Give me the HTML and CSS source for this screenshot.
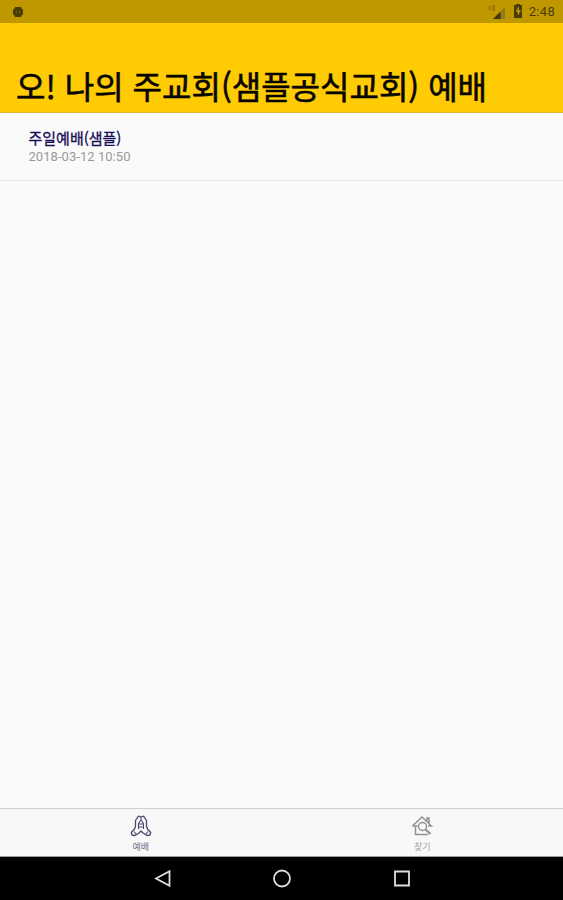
FILE: index.html
```html
<!DOCTYPE html>
<html lang="ko">
<head>
<meta charset="utf-8">
<title>예배</title>
<link rel="stylesheet" href="styles.css">
</head>
<body>
<div class="status">
  <svg class="debug" width="12" height="12" viewBox="0 0 12 12"><path d="M3 1h6l.5 1.500 1.500 1v5L9.500 9.500 9 11H3l-.5-1.500L1 8.500v-5l1.500-1z" fill="#493c08"/><path d="M4.500 4.500v3M7.500 4.500v3" stroke="#6b570e"/></svg>
  <div class="indicators">
    <svg class="signal" width="18" height="16" viewBox="0 0 18 16"><path d="M17 3v12H5z" fill="#957a17"/><path d="M12.500 7.500V15H5z" fill="#403709"/><path d="M1.500 2v4M4 2h3M4 4h3M4 6h3" stroke="#66510b" stroke-width=".8"/></svg>
    <svg class="battery" width="10" height="14" viewBox="0 0 10 14"><path d="M3 0h4v1h2v13H1V1h2z" fill="#493c08"/><path d="M5.500 3L3 7.500h2V11l2.500-4.500h-2z" fill="#c29c0c" stroke="#c29c0c" stroke-width=".5"/></svg>
    <span class="clock">2:48</span>
  </div>
</div>
<header class="header"><h1 class="title">오! 나의 주교회(샘플공식교회) 예배</h1></header>
<main class="list">
  <article class="item">
    <h2 class="name">주일예배(샘플)</h2>
    <time class="date">2018-03-12 10:50</time>
  </article>
</main>
<nav class="tabs">
  <div class="tab active">
    <svg width="22" height="22" viewBox="0 0 22 22" fill="none" stroke="currentColor" stroke-width="1.300" stroke-linejoin="round"><path d="M11 2L8.500 1.200 5.500 5.500v5.500L4.500 14 1.300 17.500l.7 2.500 3 .5 4-2.500 2-2 2 2 4 2.500 3-.5.700-2.500L17.500 14l-1-3V5.500l-3-4.300z"/><path d="M11 2v3M8.500 14V8.500L11 5l2.500 3.500V14M9 9h4M9 12h4M4 16.500l2.500 3M18 16.500l-2.500 3" stroke-width="1.100"/></svg>
    <span>예배</span>
  </div>
  <div class="tab">
    <svg width="22" height="22" viewBox="0 0 22 22" fill="none" stroke="currentColor" stroke-width="1.500"><path d="M1.500 11L11 2l9.500 9H17M4.500 11v8.500H17M1.500 11h5M16 6V3h2v5"/><circle cx="11.500" cy="11.500" r="4"/><path d="M14.500 14.500l5 4.500" stroke-width="2.200"/></svg>
    <span>찾기</span>
  </div>
</nav>
<footer class="navbar">
  <svg width="20" height="20" viewBox="0 0 20 20"><path d="M17.500 2.200v14.600L4 9.500z"/></svg>
  <svg width="20" height="20" viewBox="0 0 20 20"><circle cx="10" cy="9.500" r="8"/></svg>
  <svg width="20" height="20" viewBox="0 0 20 20"><path d="M3 2.500h14v14H3z"/></svg>
</footer>
</body>
</html>
```
FILE: styles.css
```css
* { box-sizing: border-box; }
body {
  margin: 0;
  height: 900px;
  display: flex;
  flex-direction: column;
  background: #fafafa;
  font-family: Roboto, "Noto Sans CJK KR", sans-serif;
  overflow: hidden;
}
h1, h2 { margin: 0; }
svg { display: block; flex: none; }
.status {
  height: 23px;
  background: #bf9800;
  display: flex;
  align-items: center;
  justify-content: space-between;
  padding: 0 8px 0 12px;
}
.indicators { display: flex; align-items: center; }
.battery { margin: 0 6px 2px 7px; }
.clock { font-size: 13px; line-height: 23px; color: #493c08; letter-spacing: .3px; }
.header {
  height: 90px;
  background: #ffcb03;
  border-bottom: 1px solid #dcb43b;
  padding: 38px 0 0 16px;
}
.title {
  font: 400 32px/48px "Noto Sans CJK KR", sans-serif;
  color: #080600;
  white-space: nowrap;
  -webkit-text-stroke: .6px #080600;
}
.list { flex: 1; }
.item {
  height: 68px;
  border-bottom: 1px solid #e9e9e9;
  padding: 14px 28px 0 28.5px;
}
.name {
  font: 400 15px/21px "Noto Sans CJK KR", sans-serif;
  color: #150d55;
  -webkit-text-stroke: .3px #150d55;
}
.date { display: block; font-size: 13px; line-height: 18px; color: #999; letter-spacing: .05px; }
.tabs {
  height: 49px;
  display: flex;
  background: #f8f8f8;
  border-top: 1px solid #cfcfcf;
  border-bottom: 1px solid #999;
}
.tab {
  flex: 1;
  display: flex;
  flex-direction: column;
  align-items: center;
  padding-top: 6px;
  color: #929292;
}
.active { color: #4b4870; }
.tab span { font: 9px/14px "Noto Sans CJK KR", sans-serif; margin-top: 3px; opacity: .8; }
.navbar {
  height: 43px;
  background: #000;
  display: flex;
  justify-content: center;
  align-items: center;
  gap: 100px;
}
.navbar svg { fill: none; stroke: #dedede; stroke-width: 1.8; }
```
